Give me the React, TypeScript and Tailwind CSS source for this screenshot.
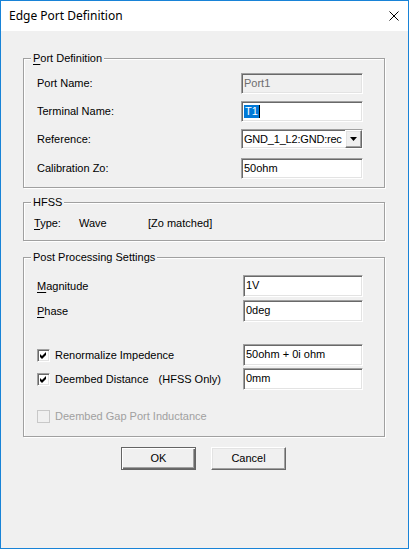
import type { ReactNode } from "react";

// classic 3D edges
const SUNKEN =
  "border border-t-[#a0a0a0] border-l-[#a0a0a0] border-r-white border-b-white shadow-[inset_1px_1px_0_#696969,inset_-1px_-1px_0_#e3e3e3]";
const RAISED =
  "border border-t-white border-l-white border-r-[#696969] border-b-[#696969] shadow-[inset_-1px_-1px_0_#a0a0a0,inset_1px_1px_0_#e3e3e3]";

function GroupBox({ title, className, children }: { title: ReactNode; className: string; children: ReactNode }) {
  return (
    <div
      className={`relative w-[362px] border border-[#a0a0a0] shadow-[inset_1px_1px_0_#fff,1px_1px_0_#fff] ${className}`}
    >
      <span className="absolute -top-[7px] left-[7px] px-[2px] bg-[#f0f0f0] leading-[13px]">{title}</span>
      {children}
    </div>
  );
}

function TextBox({
  value,
  disabled,
  width,
  height,
  children,
}: {
  value?: string;
  disabled?: boolean;
  width: string;
  height: string;
  children?: ReactNode;
}) {
  return (
    <div
      className={`${SUNKEN} ${width} ${height} flex items-center pl-[2px] pb-[1px] leading-[13px] ${
        disabled ? "bg-[#f0f0f0] text-[#6d6d6d]" : "bg-white text-black"
      }`}
    >
      {children ?? value}
    </div>
  );
}

function CheckBox({ checked, disabled }: { checked?: boolean; disabled?: boolean }) {
  return (
    <div
      className={`w-[13px] h-[13px] flex items-center justify-center ${
        disabled
          ? "border border-[#c8c8c8] bg-[#f0f0f0]"
          : `${SUNKEN} bg-white`
      }`}
    >
      {checked && (
        <svg width="9" height="9" viewBox="0 0 9 9">
          <polygon points="1,3 3,5 7,1 7,4 3,8 1,6" fill="#000" />
        </svg>
      )}
    </div>
  );
}

function Row({ label, children, className = "" }: { label: ReactNode; children: ReactNode; className?: string }) {
  return (
    <div className={`flex items-center justify-between ${className}`}>
      <span className="leading-[13px]">{label}</span>
      {children}
    </div>
  );
}

export default function App() {
  return (
    <div className="w-[409px] h-[549px] border border-[#1883d7] bg-[#f0f0f0] flex flex-col font-['Liberation_Sans',Arial,sans-serif] text-[11px] text-black overflow-hidden">
      {/* title bar */}
      <div className="h-[30px] bg-white flex items-center justify-between">
        <span className="pl-[8px] font-['Noto_Sans',sans-serif] text-[12px] text-[#000]">Edge Port Definition</span>
        <svg width="10" height="10" viewBox="0 0 10 10" className="mr-[9px]">
          <path d="M0.5 0.5 L9.5 9.5 M9.5 0.5 L0.5 9.5" stroke="#000" strokeWidth="1" />
        </svg>
      </div>

      <div className="flex flex-col pl-[22px]">
        <GroupBox
          title={
            <>
              <u className="underline-offset-2">P</u>ort Definition
            </>
          }
          className="mt-[27px] pt-[14px] pb-[8px] pl-[13px] pr-[21px] flex flex-col"
        >
          <Row label="Port Name:">
            <TextBox value="Port1" disabled width="w-[122px]" height="h-[21px]" />
          </Row>
          <Row label="Terminal Name:" className="mt-[7px]">
            <TextBox width="w-[122px]" height="h-[21px]">
              <span className="bg-[#0078d7] text-white px-[1px]">T1</span>
              <span className="w-px h-[13px] bg-black" />
            </TextBox>
          </Row>
          <Row label="Reference:" className="mt-[7px]">
            <div className={`${SUNKEN} w-[122px] h-[20px] bg-white flex items-center`}>
              <span className="flex-1 whitespace-nowrap pl-[2px] leading-[13px] tracking-[-0.2px]">GND_1_L2:GND:rec</span>
              <div className={`${RAISED} w-[17px] h-full bg-[#f0f0f0] flex items-center justify-center`}>
                <svg width="7" height="4" viewBox="0 0 7 4">
                  <polygon points="0,0 7,0 3.5,4" fill="#000" />
                </svg>
              </div>
            </div>
          </Row>
          <Row label="Calibration Zo:" className="mt-[9px]">
            <TextBox value="50ohm" width="w-[122px]" height="h-[21px]" />
          </Row>
        </GroupBox>

        <GroupBox title="HFSS" className="mt-[14px] pt-[14px] pb-[10px] pl-[10px] flex">
          <span className="w-[45px] leading-[13px]">
            <u className="underline-offset-2">T</u>ype:
          </span>
          <span className="w-[69px] leading-[13px]">Wave</span>
          <span className="leading-[13px]">[Zo matched]</span>
        </GroupBox>

        <GroupBox
          title="Post Processing Settings"
          className="mt-[16px] pt-[17px] pb-[13px] pl-[13px] pr-[21px] flex flex-col"
        >
          <Row
            label={
              <>
                <u className="underline-offset-2">M</u>agnitude
              </>
            }
          >
            <TextBox value="1V" width="w-[120px]" height="h-[22px]" />
          </Row>
          <Row
            label={
              <>
                <u className="underline-offset-2">P</u>hase
              </>
            }
            className="mt-[3px]"
          >
            <TextBox value="0deg" width="w-[120px]" height="h-[22px]" />
          </Row>
          <Row
            label={
              <span className="flex items-center gap-[5px]">
                <CheckBox checked />
                <span>Renormalize Impedence</span>
              </span>
            }
            className="mt-[22px]"
          >
            <TextBox value="50ohm + 0i ohm" width="w-[120px]" height="h-[22px]" />
          </Row>
          <Row
            label={
              <span className="flex items-center gap-[5px]">
                <CheckBox checked />
                <span>Deembed Distance</span>
                <span className="ml-[5px]">(HFSS Only)</span>
              </span>
            }
            className="mt-[2px]"
          >
            <TextBox value="0mm" width="w-[120px]" height="h-[22px]" />
          </Row>
          <div className="mt-[20px] flex items-center gap-[5px] text-[#a0a0a0] leading-[13px]">
            <CheckBox disabled />
            <span>Deembed Gap Port Inductance</span>
          </div>
        </GroupBox>
      </div>

      <div className="mt-[10px] flex gap-[15px] pl-[120px]">
        <button className="w-[75px] h-[23px] border border-[#646464] bg-[#f0f0f0] shadow-[inset_1px_1px_0_#fff,inset_-1px_-1px_0_#696969,inset_-2px_-2px_0_#a0a0a0] leading-[13px]">
          OK
        </button>
        <button className={`${RAISED} w-[75px] h-[23px] bg-[#f0f0f0] leading-[13px]`}>Cancel</button>
      </div>
    </div>
  );
}
